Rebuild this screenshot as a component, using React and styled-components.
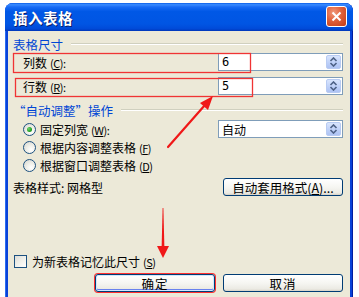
import styled, { createGlobalStyle } from "styled-components";

const GlobalStyle = createGlobalStyle`
  html, body {
    margin: 0;
    padding: 0;
    background: #ffffff;
    overflow: hidden;
  }
  body {
    font-family: "Noto Sans CJK SC", "DejaVu Sans", sans-serif;
    font-size: 12px;
    color: #000;
  }
`;

const Page = styled.div`
  position: relative;
  width: 359px;
  height: 297px;
  overflow: hidden;
  padding: 3px 0 0 5px;
  box-sizing: border-box;
`;

const Window = styled.div`
  width: 348px;
  height: 310px;
  display: flex;
  flex-direction: column;
  background: #0842d8;
  border-radius: 8px 8px 0 0;
  box-shadow: inset 1px 0 0 #2a6cf0, inset -1px 0 0 #001ea0;
`;

const TitleBar = styled.div`
  height: 28px;
  flex-shrink: 0;
  display: flex;
  align-items: center;
  justify-content: space-between;
  padding: 0 6px 0 8px;
  border-radius: 8px 8px 0 0;
  background: linear-gradient(
    180deg,
    #0a5de8 0%,
    #3b8cff 6%,
    #1a6cf5 14%,
    #0058e6 30%,
    #0055e3 75%,
    #004ad8 92%,
    #0036b8 100%
  );
`;

const Title = styled.span`
  color: #fff;
  font-weight: bold;
  font-size: 14.5px;
  letter-spacing: 0.5px;
  text-shadow: 1px 1px 0 #0a1e6a;
`;

const CloseButton = styled.div`
  width: 19px;
  height: 19px;
  border: 1px solid #fff;
  border-radius: 3px;
  display: flex;
  align-items: center;
  justify-content: center;
  background: radial-gradient(circle at 35% 30%, #f09a7c 0%, #e0603a 45%, #c23a14 100%);
  margin-top: -1px;
`;

const Body = styled.div`
  flex: 1;
  margin: 0 3px;
  background: #ece9d8;
  padding: 6px 7px 0 5px;
  display: flex;
  flex-direction: column;
`;

const GroupHeader = styled.div`
  display: flex;
  align-items: center;
  height: 14px;
  margin-top: ${(p) => p.$top || 0}px;
  color: #0046d5;
  font-size: 12.5px;
  white-space: nowrap;
  &::after {
    content: "";
    flex: 1;
    margin-left: 8px;
    border-top: 1px solid #d0d0bf;
    border-bottom: 1px solid #fff;
  }
`;

const FieldRow = styled.div`
  display: flex;
  align-items: center;
  height: 18px;
  margin-top: ${(p) => p.$top || 0}px;
`;

const FieldLabel = styled.div`
  flex: 1;
  padding-left: 10px;
  white-space: nowrap;
`;

const Mnemonic = styled.span`
  font-size: 11px;
  letter-spacing: -0.5px;
  margin-left: 3px;
  u {
    text-underline-offset: 1px;
  }
`;

const Spin = styled.div`
  width: 120px;
  height: 16px;
  border: 1px solid #7f9db9;
  background: #fff;
  display: flex;
  align-items: center;
  justify-content: space-between;
  padding-left: 3px;
  font-size: 12px;
`;

const SpinValue = styled.span`
  font-family: ${(p) => (p.$cjk ? '"Noto Sans CJK SC", sans-serif' : '"DejaVu Sans Mono", monospace')};
`;

const SpinButton = styled.div`
  width: 15px;
  height: 14px;
  margin-right: 1px;
  border-radius: 2px;
  background: linear-gradient(180deg, #d9e5fd 0%, #bccff8 60%, #aec3f3 100%);
  border: 1px solid #b8cbf2;
  box-sizing: border-box;
  display: flex;
  align-items: center;
  justify-content: center;
`;

const RadioRow = styled.div`
  display: flex;
  align-items: center;
  height: 18px;
  margin-top: ${(p) => p.$top || 0}px;
`;

const RadioLabel = styled.div`
  flex: 1;
  display: flex;
  align-items: center;
  gap: 4px;
  padding-left: 10px;
  white-space: nowrap;
`;

const Radio = styled.span`
  width: 11px;
  height: 11px;
  border-radius: 50%;
  border: 1px solid #1c5180;
  background: radial-gradient(circle at 65% 70%, #ffffff 0%, #f0f0ea 40%, #d4d4cc 100%);
  display: flex;
  align-items: center;
  justify-content: center;
  &::after {
    content: "";
    display: ${(p) => (p.$checked ? "block" : "none")};
    width: 5px;
    height: 5px;
    border-radius: 50%;
    background: radial-gradient(circle at 35% 35%, #6fd36f 0%, #21a121 60%, #188018 100%);
  }
`;

const StyleRow = styled.div`
  display: flex;
  align-items: center;
  height: 18px;
  margin-top: 4px;
`;

const StyleText = styled.div`
  flex: 1;
  white-space: nowrap;
`;

const XpButton = styled.div`
  width: ${(p) => p.$w || 118}px;
  height: 16px;
  border: 1px solid #003c74;
  border-radius: 3px;
  background: linear-gradient(180deg, #ffffff 0%, #f6f6f2 50%, #ebeae3 88%, #d6d0c5 100%);
  display: flex;
  align-items: center;
  justify-content: center;
  white-space: nowrap;
  letter-spacing: ${(p) => p.$spacing || 0}px;
  font-size: 12.5px;
  box-shadow: ${(p) =>
    p.$default ? "inset 0 0 0 1px #cee7ff, inset 0 -1px 0 1px #6982ee, 0 0 0 1px #ff3030" : "none"};
`;

const CheckRow = styled.div`
  display: flex;
  align-items: center;
  gap: 5px;
  height: 14px;
  margin-top: 58px;
  padding-left: 1px;
  white-space: nowrap;
`;

const CheckBox = styled.span`
  width: 11px;
  height: 11px;
  border: 1px solid #1c5180;
  background: linear-gradient(135deg, #dcdcd7 0%, #f0f0ea 50%, #ffffff 100%);
`;

const ButtonRow = styled.div`
  display: flex;
  justify-content: flex-end;
  gap: 8px;
  margin-top: 6px;
`;

const Overlay = styled.svg`
  position: absolute;
  left: 0;
  top: 0;
  pointer-events: none;
`;

const SpinArrows = () => (
  <svg width="9" height="10" viewBox="0 0 9 10">
    <path d="M1.5 4 L4.5 1 L7.5 4" fill="none" stroke="#4d6185" strokeWidth="1.6" />
    <path d="M1.5 6 L4.5 9 L7.5 6" fill="none" stroke="#4d6185" strokeWidth="1.6" />
  </svg>
);

const SpinBox = ({ value, cjk }) => (
  <Spin>
    <SpinValue $cjk={cjk}>{value}</SpinValue>
    <SpinButton>
      <SpinArrows />
    </SpinButton>
  </Spin>
);

const Key = ({ k, colon }) => (
  <Mnemonic>
    (<u>{k}</u>){colon ? ":" : ""}
  </Mnemonic>
);

export default function App() {
  return (
    <Page>
      <GlobalStyle />
      <Window>
        <TitleBar>
          <Title>插入表格</Title>
          <CloseButton>
            <svg width="11" height="11" viewBox="0 0 11 11">
              <path d="M1.5 1.5 L9.5 9.5 M9.5 1.5 L1.5 9.5" stroke="#fff" strokeWidth="2" />
            </svg>
          </CloseButton>
        </TitleBar>
        <Body>
          <GroupHeader>表格尺寸</GroupHeader>
          <FieldRow $top={2}>
            <FieldLabel>
              列数<Key k="C" colon />
            </FieldLabel>
            <SpinBox value="6" />
          </FieldRow>
          <FieldRow $top={6}>
            <FieldLabel>
              行数<Key k="R" colon />
            </FieldLabel>
            <SpinBox value="5" />
          </FieldRow>
          <GroupHeader $top={8}>“自动调整”操作</GroupHeader>
          <RadioRow $top={3}>
            <RadioLabel>
              <Radio $checked />
              <span>
                固定列宽<Key k="W" colon />
              </span>
            </RadioLabel>
            <SpinBox value="自动" cjk />
          </RadioRow>
          <RadioRow>
            <RadioLabel>
              <Radio />
              <span>
                根据内容调整表格<Key k="F" />
              </span>
            </RadioLabel>
          </RadioRow>
          <RadioRow>
            <RadioLabel>
              <Radio />
              <span>
                根据窗口调整表格<Key k="D" />
              </span>
            </RadioLabel>
          </RadioRow>
          <StyleRow>
            <StyleText>表格样式: 网格型</StyleText>
            <XpButton>
              自动套用格式(<u>A</u>)...
            </XpButton>
          </StyleRow>
          <CheckRow>
            <CheckBox />
            <span>
              为新表格记忆此尺寸<Key k="S" />
            </span>
          </CheckRow>
          <ButtonRow>
            <XpButton $default $spacing={1}>
              确定
            </XpButton>
            <XpButton $spacing={1}>取消</XpButton>
          </ButtonRow>
        </Body>
      </Window>
      <Overlay width="359" height="297" viewBox="0 0 359 297">
        <rect x="13.5" y="53.5" width="237" height="19" fill="none" stroke="#f03434" strokeWidth="1.3" />
        <rect x="15.5" y="78.5" width="237" height="18" fill="none" stroke="#f03434" strokeWidth="1.3" />
        <path d="M168 147 L205 105" stroke="#f01818" strokeWidth="2.2" strokeLinecap="round" />
        <polygon points="213,96 200,103 208,110" fill="#f01818" />
        <polygon points="162.6,208 163.4,208 164.4,248 161.6,248" fill="#f01818" />
        <polygon points="157,246 169,246 163,258" fill="#f01818" />
      </Overlay>
    </Page>
  );
}
